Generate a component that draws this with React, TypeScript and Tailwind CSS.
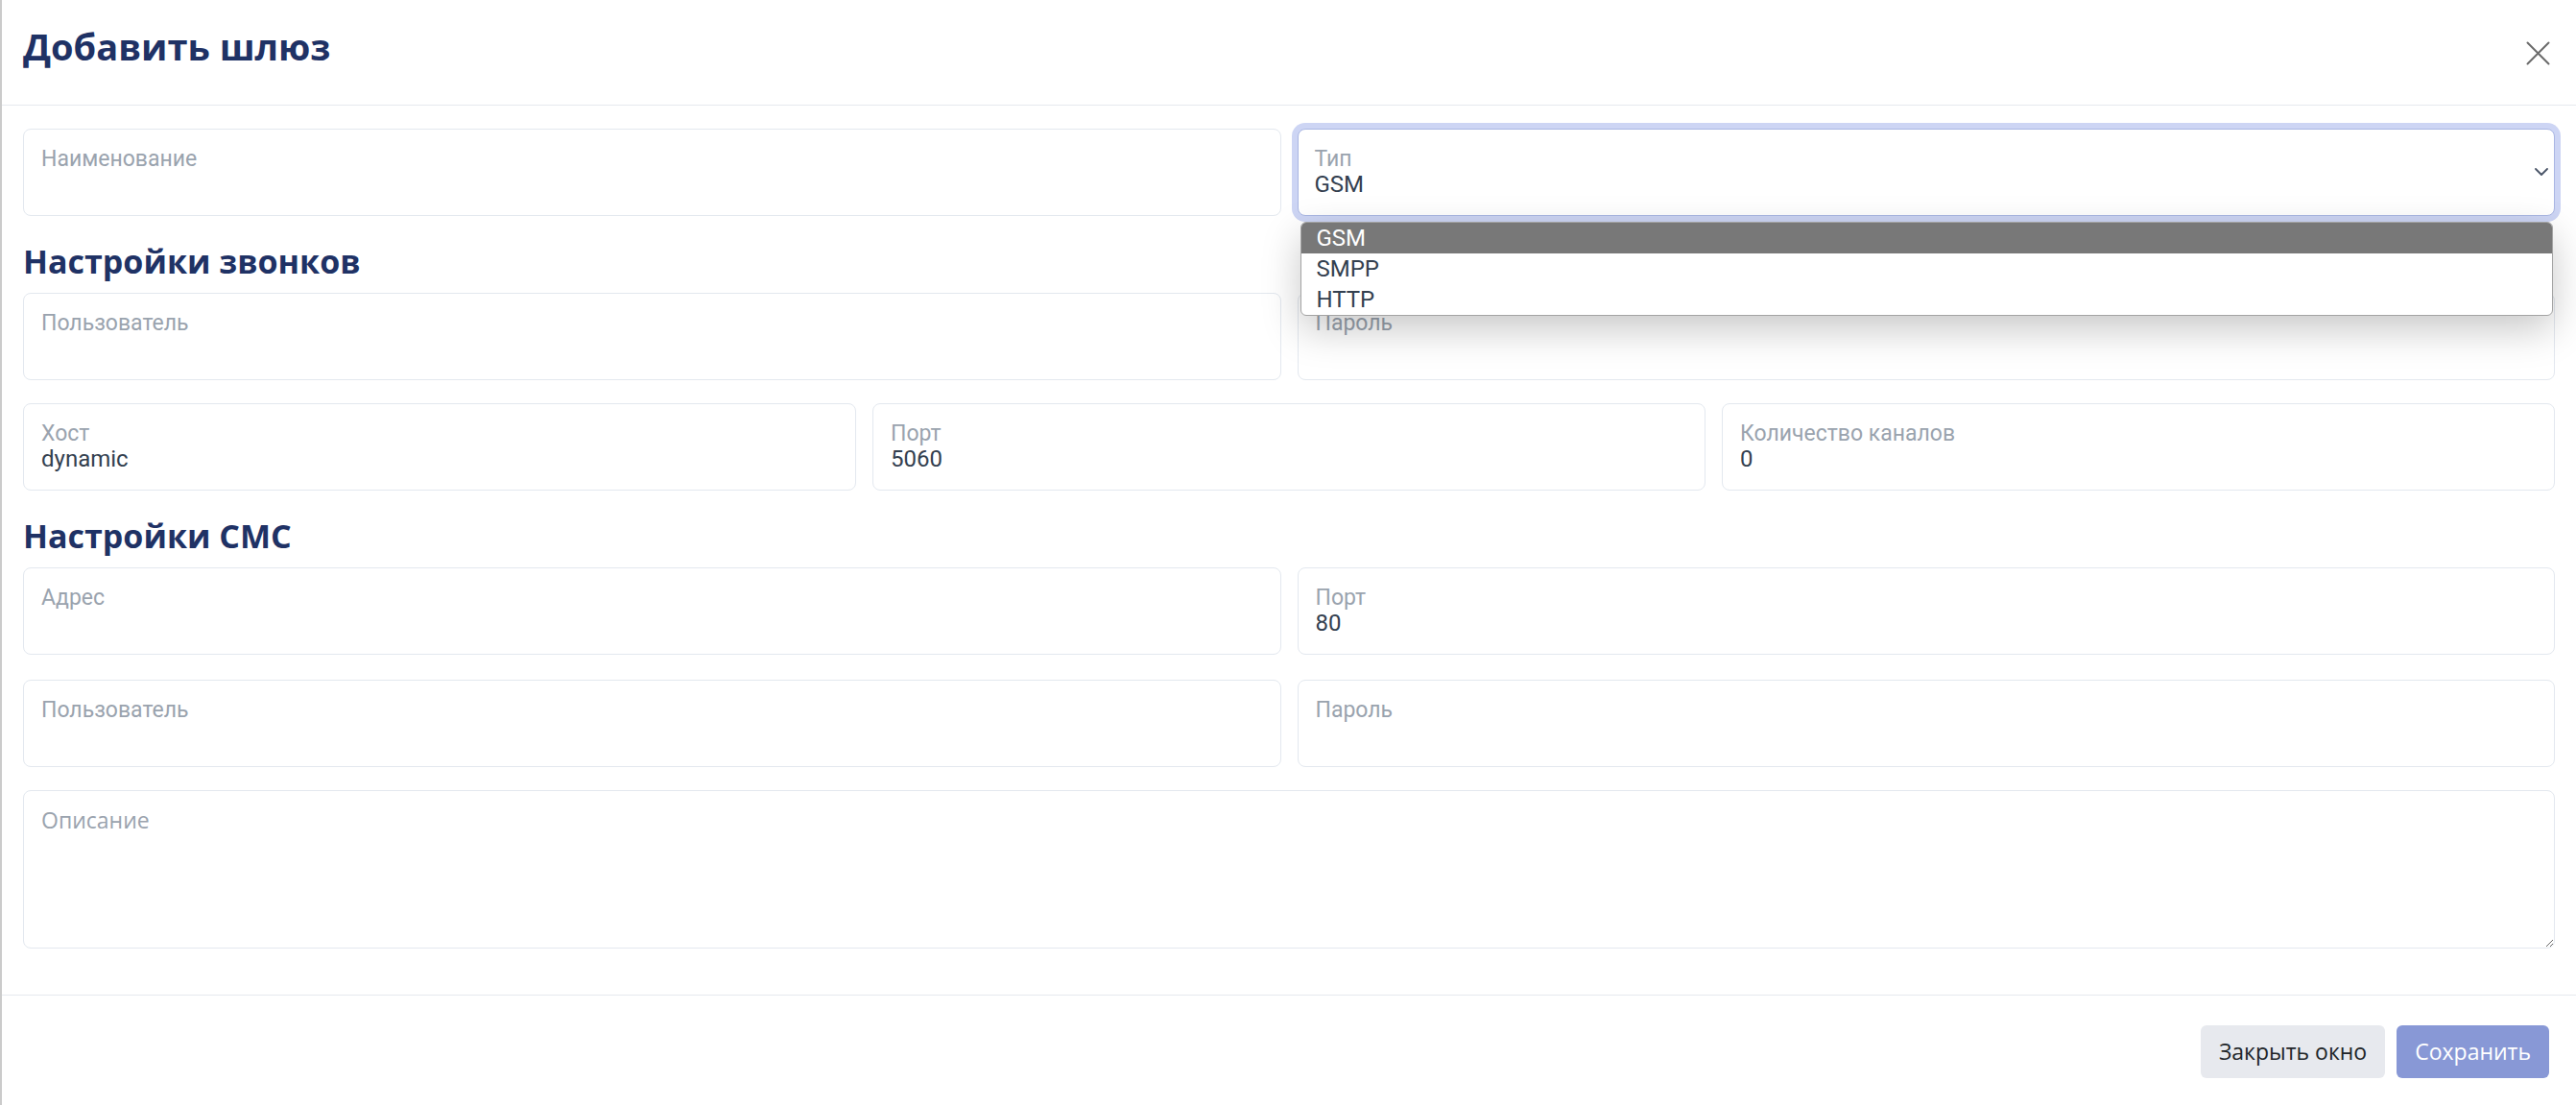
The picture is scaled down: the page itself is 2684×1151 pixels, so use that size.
import React from 'react'

const sans = { fontFamily: '"Open Sans", "Noto Sans", sans-serif' }
const cond = { fontFamily: 'Roboto, "Noto Sans", sans-serif' }

function Field({ label, value }: { label: string; value?: string }) {
  return (
    <div className="h-[91px] rounded-lg border border-[#e3e8ef] bg-white px-[18px] pt-[18px]" style={cond}>
      <div className="text-[23px] leading-[26px] text-[#9aa3ae]">{label}</div>
      {value && <div className="-mt-[1px] text-[24px] leading-[28px] text-[#33404f]">{value}</div>}
    </div>
  )
}

function TypeSelect() {
  const options = ['GSM', 'SMPP', 'HTTP']
  return (
    <div className="relative">
      <div
        className="relative h-[91px] rounded-lg border border-[#a9b6e3] bg-white px-[17px] pt-[18px] ring-[6px] ring-[#cdd5f4]"
        style={cond}
      >
        <div className="text-[23px] leading-[26px] text-[#9aa3ae]">Тип</div>
        <div className="-mt-[1px] text-[24px] leading-[28px] text-[#33404f]">GSM</div>
        <svg className="absolute right-[6px] top-[40px]" width="14" height="8" viewBox="0 0 14 8" fill="none">
          <path d="M1 1l6 6 6-6" stroke="#4a5568" strokeWidth="1.8" strokeLinecap="round" strokeLinejoin="round" />
        </svg>
      </div>
      <div
        className="absolute left-[3px] right-[2px] top-[97px] z-10 overflow-hidden rounded-md border border-[#a3a3a3] bg-white shadow-[0_14px_40px_rgba(0,0,0,0.22)]"
        style={cond}
      >
        {options.map((o, i) => (
          <div
            key={o}
            className={
              i === 0
                ? 'h-[32px] bg-[#787878] pl-[16px] text-[24px] leading-[32px] text-white'
                : 'h-[32px] pl-[16px] text-[24px] leading-[32px] text-[#33404f]'
            }
          >
            {o}
          </div>
        ))}
      </div>
    </div>
  )
}

function Heading({ children }: { children: React.ReactNode }) {
  return (
    <h2 className="pt-[21px] pb-[7px] text-[34px] font-bold leading-[52px] text-[#1f3265]" style={sans}>
      {children}
    </h2>
  )
}

export default function App() {
  return (
    <div className="flex h-[1151px] flex-col overflow-hidden border-l-2 border-[#cbcbcb] bg-white">
      <div className="flex h-[110px] shrink-0 items-start justify-between border-b border-[#e6e9ee] pl-[22px] pr-[27px]">
        <h1 className="pt-[20px] text-[38px] font-bold leading-[56px] text-[#1f3265]" style={sans}>
          Добавить шлюз
        </h1>
        <svg className="mt-[43px]" width="25" height="25" viewBox="0 0 25 25" fill="none">
          <path d="M1.5 1.5l22 22M23.5 1.5l-22 22" stroke="#6b6b6b" strokeWidth="2" strokeLinecap="round" />
        </svg>
      </div>

      <div className="flex-1 pl-[22px] pr-[22px] pt-[24px]">
        <div className="grid grid-cols-2 gap-[17px]">
          <Field label="Наименование" />
          <TypeSelect />
        </div>

        <Heading>Настройки звонков</Heading>
        <div className="grid grid-cols-2 gap-[17px]">
          <Field label="Пользователь" />
          <Field label="Пароль" />
        </div>
        <div className="mt-[24px] grid grid-cols-3 gap-[17px]">
          <Field label="Хост" value="dynamic" />
          <Field label="Порт" value="5060" />
          <Field label="Количество каналов" value="0" />
        </div>

        <Heading>Настройки СМС</Heading>
        <div className="grid grid-cols-2 gap-[17px]">
          <Field label="Адрес" />
          <Field label="Порт" value="80" />
        </div>
        <div className="mt-[26px] grid grid-cols-2 gap-[17px]">
          <Field label="Пользователь" />
          <Field label="Пароль" />
        </div>
        <textarea
          className="mt-[24px] block h-[165px] w-full rounded-lg border border-[#e3e8ef] px-[18px] pt-[14px] text-[23px] leading-[32px] text-[#33404f] outline-none placeholder:text-[#9aa3ae]"
          style={sans}
          placeholder="Описание"
        />
      </div>

      <div className="flex h-[115px] shrink-0 items-start justify-end gap-[12px] border-t border-[#e6e9ee] pr-[28px] pt-[31px]" style={sans}>
        <button className="h-[55px] rounded-md bg-[#e7e9ee] px-[19px] text-[23px] text-[#212529]">Закрыть окно</button>
        <button className="h-[55px] rounded-md bg-[#8898d6] px-[19px] text-[23px] text-white">Сохранить</button>
      </div>
    </div>
  )
}
